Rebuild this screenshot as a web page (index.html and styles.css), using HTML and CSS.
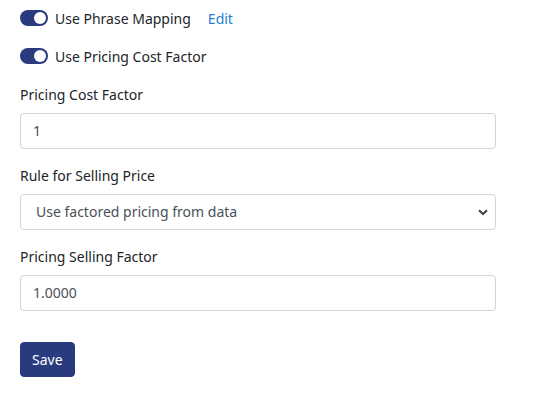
FILE: index.html
```html
<!DOCTYPE html>
<html>
<head>
<meta charset="utf-8">
<link rel="stylesheet" href="styles.css">
</head>
<body>
<form class="form">
  <div class="switch-row">
    <span class="switch"><span class="knob"></span></span>
    <span class="switch-label">Use Phrase Mapping</span>
    <a class="link" href="#">Edit</a>
  </div>
  <div class="switch-row last">
    <span class="switch"><span class="knob"></span></span>
    <span class="switch-label">Use Pricing Cost Factor</span>
  </div>
  <div class="group">
    <label class="label">Pricing Cost Factor</label>
    <div class="control">1</div>
  </div>
  <div class="group">
    <label class="label">Rule for Selling Price</label>
    <div class="select-wrap">
      <div class="control select">Use factored pricing from data</div>
      <svg class="chevron" width="10" height="7" viewBox="0 0 10 7"><path d="M1 1.2 L5 5 L9 1.2" fill="none" stroke="#444" stroke-width="2"/></svg>
    </div>
  </div>
  <div class="group">
    <label class="label">Pricing Selling Factor</label>
    <div class="control">1.0000</div>
  </div>
  <button class="btn" type="button">Save</button>
</form>
</body>
</html>
```
FILE: styles.css
```css
html, body {
  margin: 0;
  background: #fff;
}
body {
  font-family: "Noto Sans", "Open Sans", sans-serif;
  font-size: 14px;
  line-height: 21px;
  color: #212529;
  padding: 7px 0 0 20px;
}
.form {
  width: 476px;
}
.switch-row {
  display: flex;
  align-items: center;
  height: 22px;
  margin-bottom: 16px;
}
.switch-row.last {
  margin-bottom: 17px;
}
.switch {
  position: relative;
  width: 28px;
  height: 16px;
  border-radius: 8px;
  background: #293a7e;
  margin-right: 7px;
  flex: none;
}
.knob {
  position: absolute;
  right: 2px;
  top: 2px;
  width: 12px;
  height: 12px;
  border-radius: 50%;
  background: #fff;
}
.switch-label {
  color: #212529;
}
.link {
  color: #2a7fd4;
  text-decoration: none;
  margin-left: 17px;
}
.group {
  margin-bottom: 16px;
}
.label {
  display: block;
  height: 21px;
  margin-bottom: 8px;
}
.control {
  box-sizing: border-box;
  height: 36px;
  border: 1px solid #ced4da;
  border-radius: 4px;
  padding: 6px 12px;
  line-height: 22px;
  color: #495057;
}
.select-wrap {
  position: relative;
}
.select {
  padding-left: 15px;
}
.chevron {
  position: absolute;
  right: 8px;
  top: 15px;
}
.btn {
  margin-top: 15px;
  font-family: inherit;
  font-size: 14px;
  line-height: 21px;
  color: #fff;
  background: #293a7e;
  border: 1px solid #293a7e;
  border-radius: 4px;
  padding: 6px 11px;
  cursor: pointer;
}
```
